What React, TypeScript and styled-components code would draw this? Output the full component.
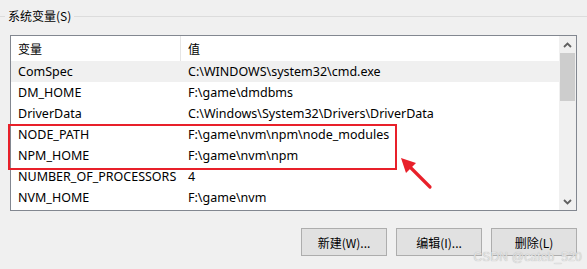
import styled, { createGlobalStyle } from "styled-components";

const GlobalStyle = createGlobalStyle`
  html, body {
    margin: 0;
    padding: 0;
    background: #f0f0f0;
  }
`;

const Page = styled.div`
  position: relative;
  width: 587px;
  height: 269px;
  overflow: hidden;
  background: #f0f0f0;
  font-family: "Noto Sans", "Noto Sans CJK SC", sans-serif;
  font-size: 12px;
  color: #000;
`;

const GroupHeader = styled.div`
  display: flex;
  align-items: center;
  height: 14px;
  margin-top: 9px;
  gap: 3px;
`;

const GroupLine = styled.div<{ $grow?: boolean }>`
  height: 1px;
  background: #dcdcdc;
  width: ${(p) => (p.$grow ? "auto" : "5px")};
  flex: ${(p) => (p.$grow ? "1" : "none")};
`;

const GroupLabel = styled.span`
  font-family: "Noto Sans CJK SC", sans-serif;
  font-size: 12px;
  line-height: 14px;
`;

const ListBox = styled.div`
  display: flex;
  margin: 12px 10px 0 10px;
  height: 174px;
  border: 1px solid #828790;
  background: #fff;
`;

const Table = styled.div`
  flex: 1;
  overflow: hidden;
`;

const HeaderRow = styled.div`
  display: flex;
  height: 25px;
  align-items: center;
  font-family: "Noto Sans CJK SC", sans-serif;
`;

const HeaderCell = styled.div<{ $w?: number }>`
  height: 100%;
  display: flex;
  align-items: center;
  box-sizing: border-box;
  padding-left: 7px;
  width: ${(p) => (p.$w ? `${p.$w}px` : "auto")};
  flex: ${(p) => (p.$w ? "none" : "1")};
  border-right: ${(p) => (p.$w ? "1px solid #e5e5e5" : "none")};
`;

const Row = styled.div<{ $sel?: boolean }>`
  display: flex;
  height: 21px;
  align-items: center;
  background: ${(p) => (p.$sel ? "#f0f0f0" : "#fff")};
  font-size: 12.5px;
`;

const Cell = styled.div<{ $w?: number }>`
  box-sizing: border-box;
  padding-left: 7px;
  white-space: nowrap;
  width: ${(p) => (p.$w ? `${p.$w}px` : "auto")};
  flex: ${(p) => (p.$w ? "none" : "1")};
`;

const ScrollBar = styled.div`
  width: 17px;
  display: flex;
  flex-direction: column;
  background: #f0f0f0;
`;

const ScrollButton = styled.div`
  height: 17px;
  display: flex;
  align-items: center;
  justify-content: center;
`;

const Thumb = styled.div`
  height: 48px;
  margin: 0 1px;
  background: #cdcdcd;
`;

const Track = styled.div`
  flex: 1;
`;

const Buttons = styled.div`
  display: flex;
  justify-content: flex-end;
  gap: 9px;
  margin: 17px 10px 0 0;
`;

const Button = styled.div`
  width: 84px;
  height: 26px;
  display: flex;
  align-items: center;
  justify-content: center;
  background: #e1e1e1;
  border: 1px solid #adadad;
  font-family: "Noto Sans CJK SC", sans-serif;
  font-size: 12px;
`;

const Highlight = styled.div`
  position: absolute;
  left: 8px;
  top: 124px;
  width: 385px;
  height: 42px;
  border: 2px solid #e8202a;
`;

const Arrow = styled.svg`
  position: absolute;
  left: 396px;
  top: 152px;
`;

const Watermark = styled.div`
  position: absolute;
  right: 5px;
  bottom: 5px;
  font-family: "Liberation Sans", sans-serif;
  font-size: 12px;
  color: #e4e4e4;
  text-shadow: 0 0 1px #a8a8a8;
  letter-spacing: 0.2px;
`;

const rows: [string, string][] = [
  ["ComSpec", "C:\\WINDOWS\\system32\\cmd.exe"],
  ["DM_HOME", "F:\\game\\dmdbms"],
  ["DriverData", "C:\\Windows\\System32\\Drivers\\DriverData"],
  ["NODE_PATH", "F:\\game\\nvm\\npm\\node_modules"],
  ["NPM_HOME", "F:\\game\\nvm\\npm"],
  ["NUMBER_OF_PROCESSORS", "4"],
  ["NVM_HOME", "F:\\game\\nvm"],
];

const Chevron = ({ up }: { up?: boolean }) => (
  <svg width="9" height="6" viewBox="0 0 9 6">
    <path
      d={up ? "M1 5 L4.5 1.5 L8 5" : "M1 1 L4.5 4.5 L8 1"}
      fill="none"
      stroke="#606060"
      strokeWidth="1.8"
    />
  </svg>
);

export default function App() {
  return (
    <Page>
      <GlobalStyle />
      <GroupHeader>
        <GroupLine />
        <GroupLabel>系统变量(S)</GroupLabel>
        <GroupLine $grow />
      </GroupHeader>
      <ListBox>
        <Table>
          <HeaderRow>
            <HeaderCell $w={170}>变量</HeaderCell>
            <HeaderCell>值</HeaderCell>
          </HeaderRow>
          {rows.map(([k, v], i) => (
            <Row key={k} $sel={i === 0}>
              <Cell $w={170}>{k}</Cell>
              <Cell>{v}</Cell>
            </Row>
          ))}
        </Table>
        <ScrollBar>
          <ScrollButton>
            <Chevron up />
          </ScrollButton>
          <Thumb />
          <Track />
          <ScrollButton>
            <Chevron />
          </ScrollButton>
        </ScrollBar>
      </ListBox>
      <Buttons>
        <Button>新建(W)...</Button>
        <Button>编辑(I)...</Button>
        <Button>删除(L)</Button>
      </Buttons>
      <Highlight />
      <Arrow width="40" height="40" viewBox="0 0 40 40">
        <line x1="34" y1="35" x2="12" y2="13" stroke="#e8202a" strokeWidth="3.2" strokeLinecap="round" />
        <polygon points="5,6 20,11 10,21" fill="#e8202a" />
      </Arrow>
      <Watermark>CSDN @cateb_520</Watermark>
    </Page>
  );
}
